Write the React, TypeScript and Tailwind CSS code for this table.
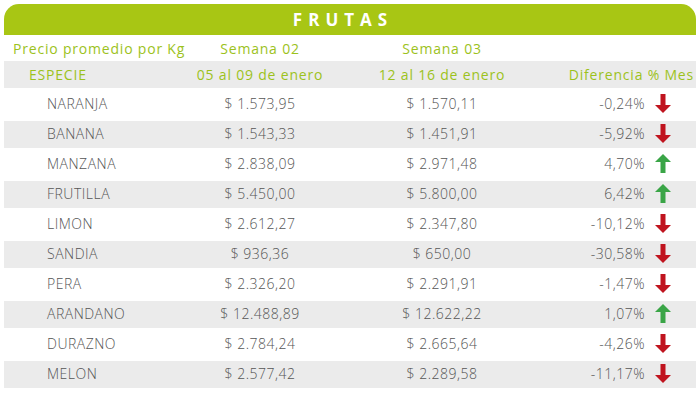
import React from "react";

type Row = { name: string; s2: string; s3: string; diff: string; up: boolean };

const rows: Row[] = [
  { name: "NARANJA", s2: "$ 1.573,95", s3: "$ 1.570,11", diff: "-0,24%", up: false },
  { name: "BANANA", s2: "$ 1.543,33", s3: "$ 1.451,91", diff: "-5,92%", up: false },
  { name: "MANZANA", s2: "$ 2.838,09", s3: "$ 2.971,48", diff: "4,70%", up: true },
  { name: "FRUTILLA", s2: "$ 5.450,00", s3: "$ 5.800,00", diff: "6,42%", up: true },
  { name: "LIMON", s2: "$ 2.612,27", s3: "$ 2.347,80", diff: "-10,12%", up: false },
  { name: "SANDIA", s2: "$ 936,36", s3: "$ 650,00", diff: "-30,58%", up: false },
  { name: "PERA", s2: "$ 2.326,20", s3: "$ 2.291,91", diff: "-1,47%", up: false },
  { name: "ARANDANO", s2: "$ 12.488,89", s3: "$ 12.622,22", diff: "1,07%", up: true },
  { name: "DURAZNO", s2: "$ 2.784,24", s3: "$ 2.665,64", diff: "-4,26%", up: false },
  { name: "MELON", s2: "$ 2.577,42", s3: "$ 2.289,58", diff: "-11,17%", up: false },
];

const cols = "grid grid-cols-[180px_152px_212px_148px]";

function Arrow({ up }: { up: boolean }) {
  return (
    <svg width="16" height="19" viewBox="0 0 16 19" className={up ? "" : "rotate-180"}>
      <path d="M8 0 L16 8 L10.5 8 L10.5 19 L5.5 19 L5.5 8 L0 8 Z" fill={up ? "#3aa547" : "#c0141f"} />
    </svg>
  );
}

export default function App() {
  return (
    <div className="w-[700px] h-[400px] bg-white pt-1 px-1 font-['Open_Sans',sans-serif]">
      <div className="h-[31px] w-[692px] rounded-t-[15px] bg-[#a8c614] flex items-center justify-center">
        <span className="pr-[14px] text-[17px] font-bold tracking-[6px] text-white">FRUTAS</span>
      </div>

      <div className={`${cols} h-[26px] items-center text-[14px] tracking-[0.8px] text-[#9cc21c]`}>
        <div className="pl-[9px] whitespace-nowrap">Precio promedio por Kg</div>
        <div className="text-center">Semana 02</div>
        <div className="text-center">Semana 03</div>
        <div />
      </div>

      <div className={`${cols} h-[27px] items-center bg-[#ebebeb] text-[14px] tracking-[0.8px] text-[#9cc21c]`}>
        <div className="pl-[25px]">ESPECIE</div>
        <div className="text-center">05 al 09 de enero</div>
        <div className="text-center">12 al 16 de enero</div>
        <div className="text-right pr-[2px] whitespace-nowrap">Diferencia % Mes</div>
      </div>

      <div className="pt-[3px] flex flex-col gap-[3px]">
        {rows.map((r, i) => (
          <div
            key={r.name}
            className={`${cols} h-[27px] pb-[2px] items-center text-[14px] tracking-[0.5px] font-light text-[#555555] ${i % 2 === 1 ? "bg-[#ebebeb]" : ""}`}
          >
            <div className="pl-[43px]">{r.name}</div>
            <div className="text-center">{r.s2}</div>
            <div className="text-center">{r.s3}</div>
            <div className="flex items-center justify-end pr-[25px] gap-[10px]">
              <span>{r.diff}</span>
              <Arrow up={r.up} />
            </div>
          </div>
        ))}
      </div>
    </div>
  );
}
